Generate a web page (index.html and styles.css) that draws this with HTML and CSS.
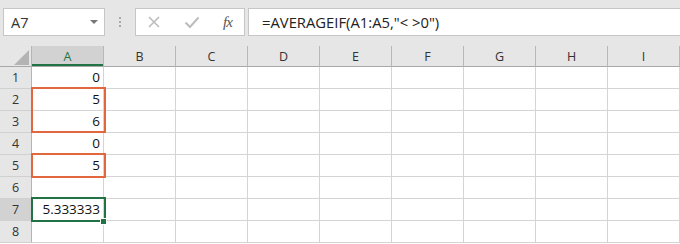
FILE: index.html
```html
<!DOCTYPE html>
<html lang="en">
<head>
  <meta charset="UTF-8">
  <title>AVERAGEIF</title>
  <link rel="stylesheet" href="styles.css">
</head>
<body>
  <div class="formula-bar">
    <div class="name-box">
      <span>A7</span>
      <span class="drop"></span>
    </div>
    <div class="grip">
      <span></span><span></span><span></span>
    </div>
    <div class="fx-box">
      <svg class="icon" width="14" height="14" viewBox="0 0 14 14">
        <path d="M2 2 L12 12 M12 2 L2 12" stroke="#bcbcbc" stroke-width="1.6" fill="none"/>
      </svg>
      <svg class="icon" width="16" height="14" viewBox="0 0 16 14">
        <path d="M1.5 7.5 L6 12 L14.5 2.5" stroke="#bcbcbc" stroke-width="2" fill="none"/>
      </svg>
      <span class="fx">fx</span>
    </div>
    <div class="formula">=AVERAGEIF(A1:A5,"&lt; &gt;0")</div>
  </div>

  <div class="sheet">
    <div class="grid">
      <div class="corner"><span class="tri"></span></div>
      <div class="col-head active">A</div>
      <div class="col-head">B</div>
      <div class="col-head">C</div>
      <div class="col-head">D</div>
      <div class="col-head">E</div>
      <div class="col-head">F</div>
      <div class="col-head">G</div>
      <div class="col-head">H</div>
      <div class="col-head">I</div>

      <div class="row-head">1</div>
      <div class="cell num">0</div><div class="cell"></div><div class="cell"></div><div class="cell"></div><div class="cell"></div><div class="cell"></div><div class="cell"></div><div class="cell"></div><div class="cell"></div>

      <div class="row-head">2</div>
      <div class="cell num">5</div><div class="cell"></div><div class="cell"></div><div class="cell"></div><div class="cell"></div><div class="cell"></div><div class="cell"></div><div class="cell"></div><div class="cell"></div>

      <div class="row-head">3</div>
      <div class="cell num">6</div><div class="cell"></div><div class="cell"></div><div class="cell"></div><div class="cell"></div><div class="cell"></div><div class="cell"></div><div class="cell"></div><div class="cell"></div>

      <div class="row-head">4</div>
      <div class="cell num">0</div><div class="cell"></div><div class="cell"></div><div class="cell"></div><div class="cell"></div><div class="cell"></div><div class="cell"></div><div class="cell"></div><div class="cell"></div>

      <div class="row-head">5</div>
      <div class="cell num">5</div><div class="cell"></div><div class="cell"></div><div class="cell"></div><div class="cell"></div><div class="cell"></div><div class="cell"></div><div class="cell"></div><div class="cell"></div>

      <div class="row-head">6</div>
      <div class="cell"></div><div class="cell"></div><div class="cell"></div><div class="cell"></div><div class="cell"></div><div class="cell"></div><div class="cell"></div><div class="cell"></div><div class="cell"></div>

      <div class="row-head active">7</div>
      <div class="cell num">5.333333</div><div class="cell"></div><div class="cell"></div><div class="cell"></div><div class="cell"></div><div class="cell"></div><div class="cell"></div><div class="cell"></div><div class="cell"></div>

      <div class="row-head">8</div>
      <div class="cell"></div><div class="cell"></div><div class="cell"></div><div class="cell"></div><div class="cell"></div><div class="cell"></div><div class="cell"></div><div class="cell"></div><div class="cell"></div>
    </div>

    <div class="mark mark-a2"></div>
    <div class="mark mark-a5"></div>
    <div class="selection"></div>
    <div class="handle"></div>
  </div>
</body>
</html>
```

FILE: styles.css
```css
body {
  margin: 0;
  width: 680px;
  height: 244px;
  overflow: hidden;
  background-color: #ffffff;
  font-family: "Open Sans", "Noto Sans", sans-serif;
  color: #222;
}

.formula-bar {
  display: flex;
  align-items: flex-start;
  height: 46px;
  padding-top: 8px;
  box-sizing: border-box;
  background-color: #e6e6e6;
}

.name-box {
  display: flex;
  align-items: center;
  justify-content: space-between;
  width: 102px;
  height: 28px;
  margin-left: 3px;
  padding: 0 6px 0 7px;
  box-sizing: border-box;
  background-color: #ffffff;
  border: 1px solid #c6c6c6;
  font-size: 14.5px;
  color: #333;
}

.drop {
  width: 0;
  height: 0;
  border-left: 4px solid transparent;
  border-right: 4px solid transparent;
  border-top: 4px solid #777;
}

.grip {
  display: flex;
  flex-direction: column;
  align-items: center;
  gap: 2px;
  width: 30px;
  padding-top: 9px;
}

.grip span {
  width: 2px;
  height: 2px;
  background-color: #a9a9a9;
}

.fx-box {
  display: flex;
  align-items: center;
  width: 110px;
  height: 28px;
  padding-left: 11px;
  box-sizing: border-box;
  background-color: #ffffff;
  border: 1px solid #c6c6c6;
}

.fx-box .icon {
  margin-right: 23px;
}

.fx {
  font-family: "Liberation Serif", serif;
  font-style: italic;
  font-size: 15px;
  color: #555;
  letter-spacing: -1px;
}

.formula {
  flex: 1;
  height: 28px;
  margin-left: 3px;
  margin-right: -1px;
  padding-left: 13px;
  box-sizing: border-box;
  background-color: #ffffff;
  border: 1px solid #c6c6c6;
  font-size: 14.8px;
  line-height: 26px;
  color: #222;
}

.sheet {
  position: relative;
}

.grid {
  display: grid;
  grid-template-columns: 32px repeat(9, 72px);
  grid-template-rows: 21px repeat(8, 22px);
}

.grid > div {
  box-sizing: border-box;
}

.corner {
  position: relative;
  background-color: #e6e6e6;
  border-right: 1px solid #b5b5b5;
  border-bottom: 1px solid #a8a8a8;
}

.tri {
  position: absolute;
  left: 14px;
  top: 4px;
  width: 15px;
  height: 15px;
  background-color: #b4b4b4;
  clip-path: polygon(100% 0, 100% 100%, 0 100%);
}

.col-head {
  display: flex;
  align-items: center;
  justify-content: center;
  background-color: #e6e6e6;
  border-right: 1px solid #b8b8b8;
  border-bottom: 1px solid #a8a8a8;
  font-size: 12.5px;
  color: #333;
}

.col-head.active {
  background-color: #d2d2d2;
  color: #217346;
  box-shadow: inset 0 -2px 0 #217346;
}

.row-head {
  display: flex;
  align-items: center;
  justify-content: center;
  background-color: #e6e6e6;
  border-right: 1px solid #b5b5b5;
  border-bottom: 1px solid #d0d0d0;
  font-size: 12.5px;
  color: #333;
}

.row-head.active {
  background-color: #d2d2d2;
}

.cell {
  border-right: 1px solid #d4d4d4;
  border-bottom: 1px solid #d4d4d4;
  font-size: 13.5px;
  line-height: 21px;
  color: #111;
}

.num {
  text-align: right;
  padding-right: 3px;
}

.mark {
  position: absolute;
  left: 31px;
  width: 75px;
  box-sizing: border-box;
  border: 2px solid #e2663e;
}

.mark-a2 {
  top: 41px;
  height: 46px;
}

.mark-a5 {
  top: 107px;
  height: 25px;
}

.selection {
  position: absolute;
  left: 31px;
  top: 151px;
  width: 75px;
  height: 25px;
  box-sizing: border-box;
  border: 2px solid #217346;
}

.handle {
  position: absolute;
  left: 100px;
  top: 172px;
  width: 7px;
  height: 7px;
  box-sizing: border-box;
  background-color: #217346;
  border: 1px solid #ffffff;
}
```
